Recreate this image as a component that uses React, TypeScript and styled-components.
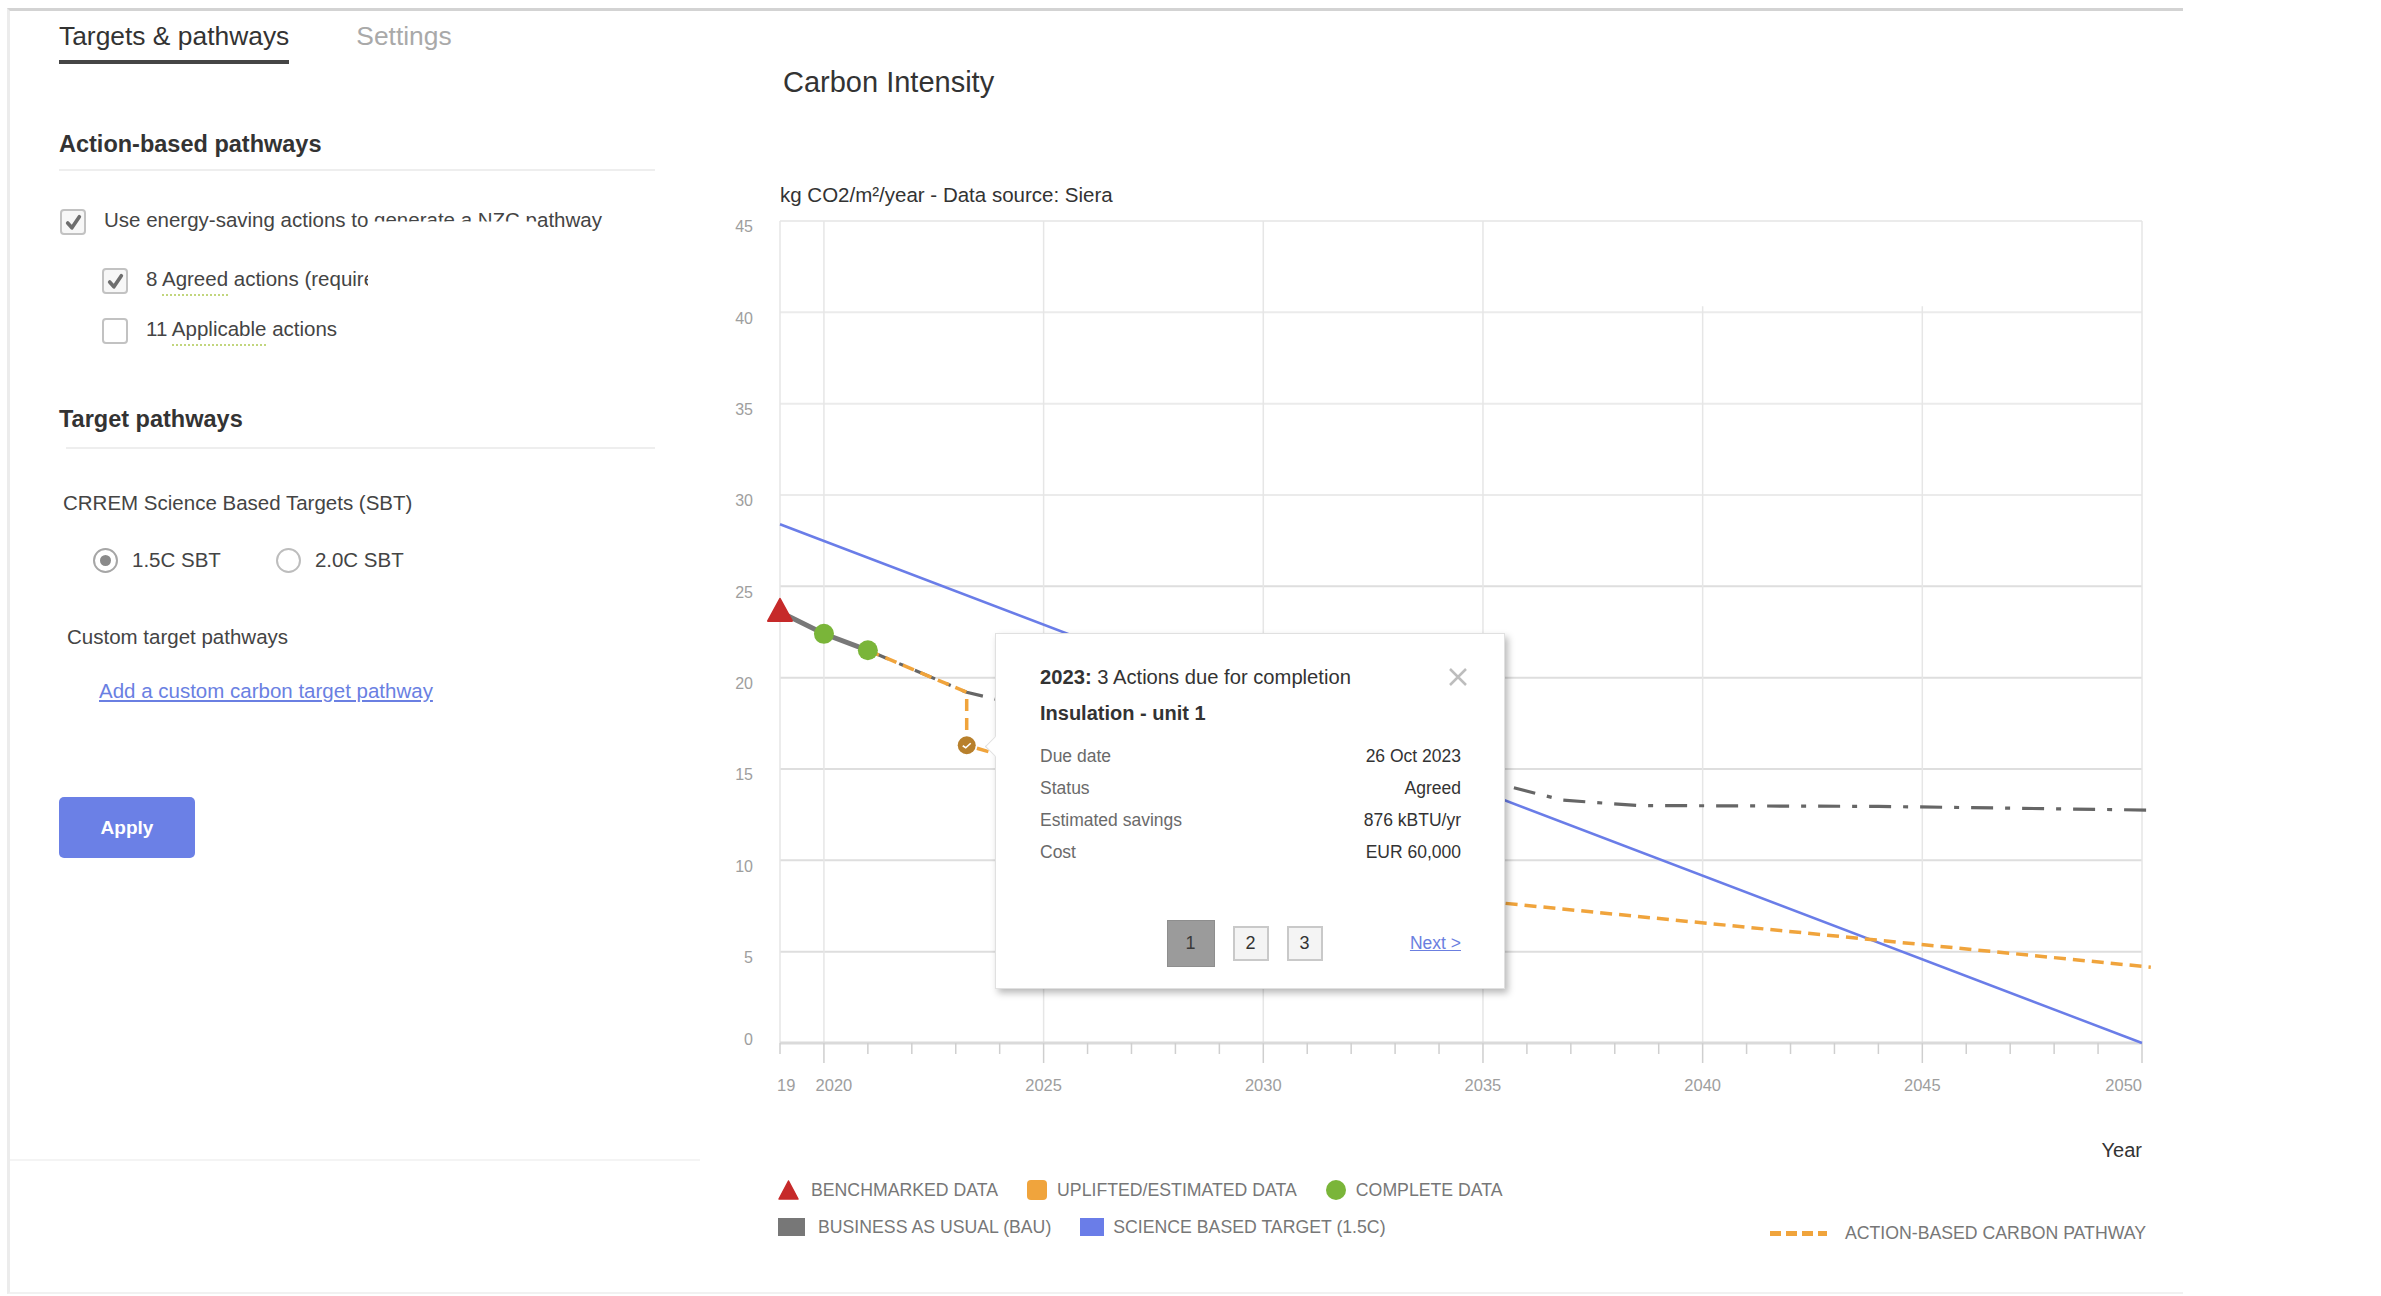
import styled, { createGlobalStyle } from "styled-components";

const GlobalStyle = createGlobalStyle`
  html, body {
    margin: 0;
    padding: 0;
    background: #fff;
  }
  body {
    font-family: "Liberation Sans", Arial, sans-serif;
    color: #333;
  }
  * {
    box-sizing: border-box;
  }
`;

// plot box inside the chart svg
const L = 50;
const R = 1412;
const T = 14;
const B = 836;
const px = (yr: number) => L + ((yr - 2019) * (R - L)) / 31;
const py = (v: number) => B - (v * (B - T)) / 45;
const line = (list: [number, number][]) =>
  list.map(([a, b]) => `${px(a).toFixed(1)},${py(b).toFixed(1)}`).join(" ");

const YEARS = Array.from({ length: 32 }, (_, i) => 2019 + i);
const VALUES = [5, 10, 15, 20, 25, 30, 35, 40, 45];

const bauActual: [number, number][] = [
  [2019, 23.6],
  [2020, 22.4],
  [2021, 21.5],
];
const bauProjection: [number, number][] = [
  [2021, 21.5],
  [2023.25, 19.2],
  [2025, 18.2],
  [2035.5, 14.1],
  [2036.8, 13.3],
  [2038.5, 13.0],
  [2044, 12.95],
  [2050.2, 12.75],
];
const actionPathway: [number, number][] = [
  [2021, 21.5],
  [2023.25, 19.2],
  [2023.25, 16.3],
  [2035.5, 7.65],
  [2050.2, 4.15],
];

const actionRows = [
  ["Due date", "26 Oct 2023"],
  ["Status", "Agreed"],
  ["Estimated savings", "876 kBTU/yr"],
  ["Cost", "EUR 60,000"],
];

const Frame = styled.div`
  margin: 8px 0 0 7px;
  width: 2176px;
  height: 1286px;
  display: flex;
  border-top: 3px solid #d3d3d3;
  border-left: 3px solid #ececec;
  border-bottom: 2px solid #f1f1f1;
`;

/* ---------- left settings column ---------- */

const Sidebar = styled.aside`
  width: 690px;
  flex-shrink: 0;
`;

const SidebarBody = styled.div`
  height: 1150px;
  padding-left: 49px;
  border-bottom: 2px solid #f4f4f4;
`;

const Tabs = styled.div`
  display: flex;
  gap: 67px;
`;

const Tab = styled.div<{ $active?: boolean }>`
  padding: 10px 0 9px;
  font-size: 26.4px;
  line-height: 30px;
  color: ${(p) => (p.$active ? "#333" : "#a9a9a9")};
  border-bottom: 4px solid ${(p) => (p.$active ? "#454545" : "transparent")};
`;

const SectionTitle = styled.h2<{ $top: number }>`
  margin: ${(p) => p.$top}px 0 0;
  font-size: 23.5px;
  font-weight: 700;
  line-height: 28px;
  color: #333;
`;

const Divider = styled.div<{ $top: number; $inset?: number }>`
  margin: ${(p) => p.$top}px 0 0 ${(p) => p.$inset ?? 0}px;
  width: ${(p) => 596 - (p.$inset ?? 0)}px;
  height: 2px;
  background: #eeeeee;
`;

const CheckRow = styled.label<{ $top: number; $indent?: number }>`
  display: flex;
  align-items: center;
  gap: 18px;
  height: 26px;
  margin: ${(p) => p.$top}px 0 0 ${(p) => p.$indent ?? 1}px;
  font-size: 20.5px;
  line-height: 26px;
  color: #444;
  white-space: nowrap;
`;

const CheckText = styled.span<{ $width?: number }>`
  display: block;
  margin-top: -5px;
  width: ${(p) => (p.$width ? `${p.$width}px` : "auto")};
  clip-path: ${(p) => (p.$width ? "inset(-6px 0 -12px 0)" : "none")};
`;

const Box = styled.span<{ $checked?: boolean }>`
  width: 26px;
  height: 26px;
  flex-shrink: 0;
  display: flex;
  align-items: center;
  justify-content: center;
  border: 2px solid #c2c2c2;
  border-radius: 4px;
  background: ${(p) => (p.$checked ? "#f7f7f7" : "#fff")};
`;

const Hint = styled.span`
  padding-bottom: 4px;
  border-bottom: 2px dotted #c2d67e;
`;

// lower part of this run of text is hidden by a white band
const Clipped = styled.span`
  display: inline-block;
  clip-path: inset(0 0 11px 0);
`;

const FieldLabel = styled.div<{ $top: number; $left: number }>`
  margin: ${(p) => p.$top}px 0 0 ${(p) => p.$left}px;
  font-size: 20.5px;
  line-height: 24px;
  color: #444;
`;

const RadioRow = styled.div`
  display: flex;
  align-items: center;
  gap: 55px;
  height: 28px;
  margin: 31px 0 0 34px;
`;

const RadioOption = styled.label`
  display: flex;
  align-items: center;
  gap: 14px;
  font-size: 20.5px;
  color: #444;
`;

const RadioDot = styled.span<{ $checked?: boolean }>`
  width: 25px;
  height: 25px;
  border-radius: 50%;
  border: 2px solid ${(p) => (p.$checked ? "#a6a6a6" : "#bdbdbd")};
  display: flex;
  align-items: center;
  justify-content: center;

  &::after {
    content: "";
    width: 11px;
    height: 11px;
    border-radius: 50%;
    background: ${(p) => (p.$checked ? "#8a8a8a" : "transparent")};
  }
`;

const AddLink = styled.a`
  display: inline-block;
  margin: 30px 0 0 40px;
  font-size: 20.5px;
  line-height: 24px;
  color: #6a7fe2;
  text-decoration: underline;
  cursor: pointer;
`;

const ApplyButton = styled.button`
  display: block;
  margin-top: 94px;
  width: 136px;
  height: 61px;
  border: none;
  border-radius: 5px;
  background: #6b80e6;
  color: #fff;
  font-family: inherit;
  font-size: 19px;
  font-weight: 700;
`;

/* ---------- chart column ---------- */

const ChartPanel = styled.section`
  flex: 1;
  padding-top: 55px;
`;

const ChartTitle = styled.h1`
  margin: 0 0 0 83px;
  font-size: 29px;
  font-weight: 400;
  line-height: 32px;
  color: #333;
`;

const Units = styled.div`
  margin: 85px 0 0 80px;
  font-size: 20.5px;
  line-height: 24px;
  color: #333;
`;

const ChartColumn = styled.div`
  position: relative;
  width: 1412px;
  margin-left: 30px;
`;

const ChartSvg = styled.svg`
  display: block;
  overflow: visible;
  font-family: "Liberation Sans", Arial, sans-serif;
`;

const AxisTitle = styled.div`
  margin-top: 31px;
  text-align: right;
  font-size: 20px;
  line-height: 24px;
  color: #333;
`;

const Legend = styled.div`
  display: flex;
  justify-content: space-between;
  align-items: flex-end;
  margin: 17px -4px 0 48px;
`;

const LegendRows = styled.div`
  display: flex;
  flex-direction: column;
  gap: 15px;
`;

const LegendRow = styled.div`
  display: flex;
  align-items: center;
  gap: 29px;
`;

const LegendItem = styled.div<{ $gap?: number }>`
  display: flex;
  align-items: center;
  gap: ${(p) => p.$gap ?? 11}px;
  font-size: 17.7px;
  line-height: 22px;
  color: #777;
  white-space: nowrap;
`;

const Swatch = styled.span<{ $color: string; $w: number; $h: number; $round?: string }>`
  display: block;
  width: ${(p) => p.$w}px;
  height: ${(p) => p.$h}px;
  background: ${(p) => p.$color};
  border-radius: ${(p) => p.$round ?? "0"};
`;

const DashSwatch = styled.span`
  display: block;
  width: 57px;
  height: 5px;
  background: repeating-linear-gradient(90deg, #f0a43c 0 11px, transparent 11px 16px);
`;

const PathwayItem = styled(LegendItem)`
  margin-bottom: -6px;
`;

/* ---------- action popover ---------- */

const Popover = styled.div`
  position: absolute;
  left: 265px;
  top: 426px;
  width: 510px;
  height: 356px;
  padding: 30px 43px 0 44px;
  background: #fff;
  border: 1px solid #e0e0e0;
  box-shadow: 3px 4px 7px rgba(0, 0, 0, 0.28);

  &::before {
    content: "";
    position: absolute;
    left: -8px;
    top: 105px;
    width: 14px;
    height: 14px;
    background: #fff;
    border-left: 1px solid #e0e0e0;
    border-bottom: 1px solid #e0e0e0;
    transform: rotate(45deg);
  }
`;

const PopoverHead = styled.div`
  display: flex;
  justify-content: space-between;
  align-items: center;
  height: 26px;
  font-size: 20.2px;
  color: #333;

  b {
    font-weight: 700;
  }
`;

const CloseIcon = styled.svg`
  margin-right: -8px;
`;

const ActionName = styled.div`
  margin-top: 10px;
  font-size: 20px;
  font-weight: 700;
  line-height: 26px;
  color: #333;
`;

const DetailList = styled.div`
  margin-top: 14px;
`;

const DetailRow = styled.div`
  display: flex;
  justify-content: space-between;
  align-items: center;
  height: 32px;
  font-size: 17.5px;
  color: #333;

  span:first-child {
    color: #6a6a6a;
  }
`;

const Pager = styled.div`
  display: grid;
  grid-template-columns: 1fr auto 1fr;
  align-items: center;
  margin-top: 52px;
  height: 47px;
`;

const PageButtons = styled.div`
  grid-column: 2;
  display: flex;
  align-items: center;
  gap: 18px;
  margin-right: 12px;
`;

const PageButton = styled.span<{ $active?: boolean }>`
  display: flex;
  align-items: center;
  justify-content: center;
  width: ${(p) => (p.$active ? 48 : 36)}px;
  height: ${(p) => (p.$active ? 47 : 35)}px;
  background: ${(p) => (p.$active ? "#9b9b9b" : "#f4f4f4")};
  border: ${(p) => (p.$active ? "1px solid #8e8e8e" : "2px solid #c9c9c9")};
  font-size: 18px;
  color: ${(p) => (p.$active ? "#3a3a3a" : "#333")};
`;

const NextLink = styled.a`
  grid-column: 3;
  justify-self: end;
  font-size: 17.5px;
  color: #6b7fe0;
  text-decoration: underline;
`;

const Tick = () => (
  <svg width="17" height="17" viewBox="0 0 16 16">
    <path d="M2.5 8.5 L6.5 13 L13.5 2.5" fill="none" stroke="#6e6e6e" strokeWidth="3.4" strokeLinecap="round" strokeLinejoin="round" />
  </svg>
);

const TriangleMark = () => (
  <svg width="21" height="20" viewBox="0 0 21 20">
    <polygon points="10.5,1 20,19 1,19" fill="#c62a2a" stroke="#c62a2a" strokeWidth="1.5" strokeLinejoin="round" />
  </svg>
);

const CarbonChart = () => {
  const xLabels: [string, number, "start" | "middle" | "end"][] = [
    ["19", 47, "start"],
    ["2020", px(2020) + 10, "middle"],
    ["2025", px(2025), "middle"],
    ["2030", px(2030), "middle"],
    ["2035", px(2035), "middle"],
    ["2040", px(2040), "middle"],
    ["2045", px(2045), "middle"],
    ["2050", R, "end"],
  ];
  const bx = px(2019);
  const by = py(23.6);
  const mx = px(2023.25);
  const my = py(16.3);

  return (
    <ChartSvg width={R} height={900}>
      {/* grid */}
      {VALUES.map((v) => (
        <line key={v} x1={L} x2={R} y1={py(v)} y2={py(v)} stroke={v <= 25 ? "#dedede" : "#ebebeb"} strokeWidth={2} />
      ))}
      {[2020, 2025, 2030, 2035, 2050].map((yr) => (
        <line key={yr} x1={px(yr)} x2={px(yr)} y1={T} y2={B} stroke="#e6e6e6" strokeWidth={1.5} />
      ))}
      {[2040, 2045].map((yr) => (
        <line key={yr} x1={px(yr)} x2={px(yr)} y1={py(40) - 6} y2={B} stroke="#e6e6e6" strokeWidth={1.5} />
      ))}
      <line x1={L} x2={L} y1={T} y2={B} stroke="#e6e6e6" strokeWidth={1.5} />

      {/* axes */}
      <line x1={L} x2={R} y1={B} y2={B} stroke="#dadada" strokeWidth={3} />
      {YEARS.map((yr) => (
        <line key={yr} x1={px(yr)} x2={px(yr)} y1={B} y2={B + (yr % 5 === 0 ? 20 : 11)} stroke="#cfcfcf" strokeWidth={1.5} />
      ))}
      {[0, ...VALUES].map((v) => (
        <text key={v} x={23} y={py(v) + (v === 0 ? -2 : 7)} textAnchor="end" dominantBaseline="middle" fontSize={16} fill="#9e9e9e">
          {v}
        </text>
      ))}
      {xLabels.map(([label, x, anchor]) => (
        <text key={label} x={x} y={880} textAnchor={anchor} dominantBaseline="middle" fontSize={16.5} fill="#9e9e9e">
          {label}
        </text>
      ))}

      {/* science based target */}
      <line x1={px(2019)} y1={py(28.4)} x2={px(2050)} y2={py(0)} stroke="#6a7de8" strokeWidth={2.5} />

      {/* business as usual projection */}
      <polyline points={line(bauProjection)} fill="none" stroke="#666" strokeWidth={3.2} strokeDasharray="22 12 5 12" />

      {/* action-based pathway */}
      <polyline points={line(actionPathway)} fill="none" stroke="#f0a43c" strokeWidth={3.5} strokeDasharray="12 7" />

      {/* recorded data */}
      <polyline points={line(bauActual)} fill="none" stroke="#787878" strokeWidth={5} />
      <polygon
        points={`${bx},${by - 13} ${bx + 12},${by + 9} ${bx - 12},${by + 9}`}
        fill="#c62a2a"
        stroke="#c62a2a"
        strokeWidth={2}
        strokeLinejoin="round"
      />
      <circle cx={px(2020)} cy={py(22.4)} r={10} fill="#7ab539" />
      <circle cx={px(2021)} cy={py(21.5)} r={10} fill="#7ab539" />
      <circle cx={mx} cy={my} r={9} fill="#b8802c" />
      <path d={`M${mx - 4} ${my + 0.5} L${mx - 1} ${my + 2.5} L${mx + 4} ${my - 2}`} fill="none" stroke="#fff" strokeWidth={1.6} />
    </ChartSvg>
  );
};

const App = () => (
  <>
    <GlobalStyle />
    <Frame>
      <Sidebar>
        <SidebarBody>
          <Tabs>
            <Tab $active>Targets &amp; pathways</Tab>
            <Tab>Settings</Tab>
          </Tabs>

          <SectionTitle $top={66}>Action-based pathways</SectionTitle>
          <Divider $top={11} />

          <CheckRow $top={38}>
            <Box $checked>
              <Tick />
            </Box>
            <CheckText>
              Use energy-saving actions to <Clipped>generate a NZC p</Clipped>athway
            </CheckText>
          </CheckRow>
          <CheckRow $top={33} $indent={43}>
            <Box $checked>
              <Tick />
            </Box>
            <CheckText $width={222}>
              8 <Hint>Agreed</Hint> actions (required for NZC pathway)
            </CheckText>
          </CheckRow>
          <CheckRow $top={24} $indent={43}>
            <Box />
            <CheckText>
              11 <Hint>Applicable</Hint> actions
            </CheckText>
          </CheckRow>

          <SectionTitle $top={61}>Target pathways</SectionTitle>
          <Divider $top={14} $inset={7} />

          <FieldLabel $top={42} $left={4}>
            CRREM Science Based Targets (SBT)
          </FieldLabel>
          <RadioRow>
            <RadioOption>
              <RadioDot $checked />
              1.5C SBT
            </RadioOption>
            <RadioOption>
              <RadioDot />
              2.0C SBT
            </RadioOption>
          </RadioRow>

          <FieldLabel $top={51} $left={8}>
            Custom target pathways
          </FieldLabel>
          <AddLink>Add a custom carbon target pathway</AddLink>

          <ApplyButton>Apply</ApplyButton>
        </SidebarBody>
      </Sidebar>

      <ChartPanel>
        <ChartTitle>Carbon Intensity</ChartTitle>
        <Units>kg CO2/m²/year - Data source: Siera</Units>
        <ChartColumn>
          <CarbonChart />

          <Popover>
            <PopoverHead>
              <span>
                <b>2023:</b> 3 Actions due for completion
              </span>
              <CloseIcon width="22" height="22" viewBox="0 0 22 22">
                <path d="M3 3 L19 19 M19 3 L3 19" stroke="#bdbdbd" strokeWidth="2.5" />
              </CloseIcon>
            </PopoverHead>
            <ActionName>Insulation - unit 1</ActionName>
            <DetailList>
              {actionRows.map(([label, value]) => (
                <DetailRow key={label}>
                  <span>{label}</span>
                  <span>{value}</span>
                </DetailRow>
              ))}
            </DetailList>
            <Pager>
              <PageButtons>
                <PageButton $active>1</PageButton>
                <PageButton>2</PageButton>
                <PageButton>3</PageButton>
              </PageButtons>
              <NextLink>Next &gt;</NextLink>
            </Pager>
          </Popover>

          <AxisTitle>Year</AxisTitle>
          <Legend>
            <LegendRows>
              <LegendRow>
                <LegendItem $gap={12}>
                  <TriangleMark />
                  BENCHMARKED DATA
                </LegendItem>
                <LegendItem $gap={10}>
                  <Swatch $color="#f0a43c" $w={20} $h={20} $round="4px" />
                  UPLIFTED/ESTIMATED DATA
                </LegendItem>
                <LegendItem $gap={10}>
                  <Swatch $color="#7ab539" $w={20} $h={20} $round="50%" />
                  COMPLETE DATA
                </LegendItem>
              </LegendRow>
              <LegendRow>
                <LegendItem $gap={13}>
                  <Swatch $color="#777" $w={27} $h={18} />
                  BUSINESS AS USUAL (BAU)
                </LegendItem>
                <LegendItem $gap={9}>
                  <Swatch $color="#6a7de8" $w={24} $h={18} />
                  SCIENCE BASED TARGET (1.5C)
                </LegendItem>
              </LegendRow>
            </LegendRows>
            <PathwayItem $gap={18}>
              <DashSwatch />
              ACTION-BASED CARBON PATHWAY
            </PathwayItem>
          </Legend>
        </ChartColumn>
      </ChartPanel>
    </Frame>
  </>
);

export default App;
